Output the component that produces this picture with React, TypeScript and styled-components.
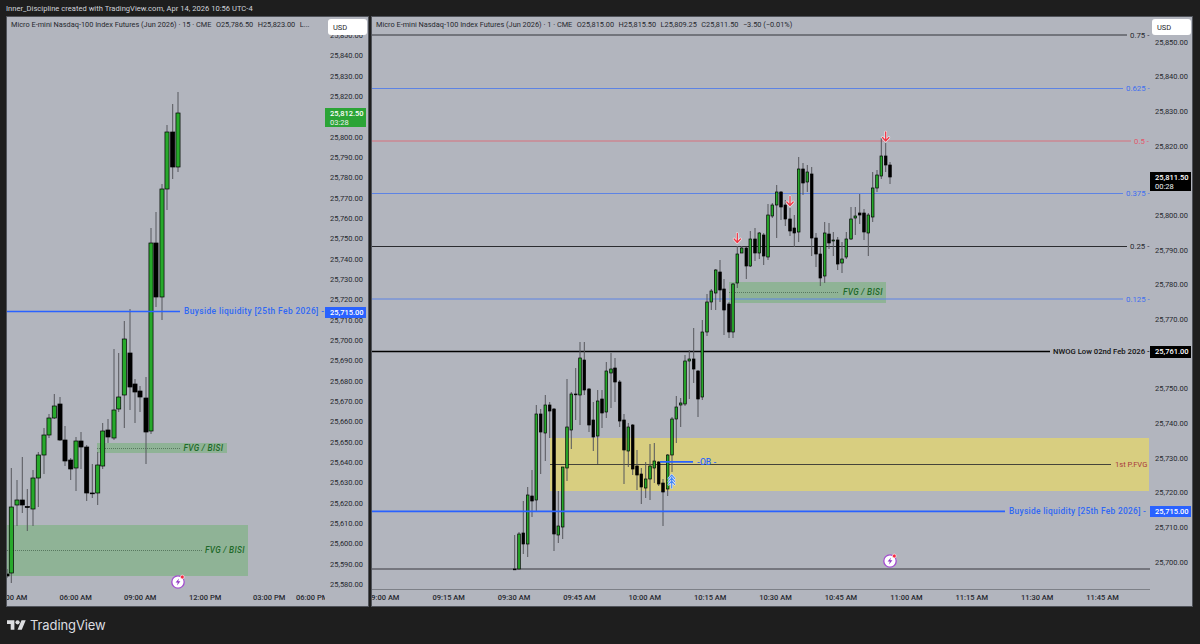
import React from 'react'
import styled, { createGlobalStyle } from 'styled-components'

// candle = [x, high, low, bodyTop, bodyBottom, up]; values are page pixels read off the chart
type Candle = [number, number, number, number, number, number]

const leftCandles: Candle[] = [
  [7, 569, 578, 574, 576, 0],
  [11.3, 468, 583, 507, 573, 1],
  [17, 480, 526, 500, 505, 1],
  [22.3, 457, 513, 500, 505, 0],
  [27.3, 489, 531, 506.5, 507.5, 0],
  [33, 470, 526, 478, 509, 1],
  [38.3, 452, 507, 455, 478, 1],
  [44, 428, 474, 435, 455, 1],
  [49, 414, 438, 418, 435, 1],
  [54.3, 394, 419, 406, 418, 1],
  [60, 397, 441, 404, 440, 0],
  [65, 426, 466, 440, 461, 0],
  [70.7, 458, 480, 460, 469, 0],
  [76, 437, 491, 441, 468, 1],
  [81, 432, 469, 441, 447, 0],
  [86.7, 445, 501, 447, 493, 0],
  [92.3, 464, 498, 493, 493.5, 0],
  [97.7, 452, 505, 465, 493, 1],
  [102.7, 423, 469, 431, 466, 1],
  [108, 419, 443, 430, 437, 0],
  [114, 349, 440, 410, 438, 1],
  [118.7, 353, 412, 397, 409, 1],
  [124.3, 321, 428, 339, 395, 1],
  [130, 309, 410, 353, 387, 0],
  [135, 379, 423, 384, 392, 0],
  [140, 386, 412, 391, 397, 0],
  [146, 377, 464, 398, 432, 0],
  [151, 228, 434, 243, 431, 1],
  [156, 212, 307, 243, 297, 0],
  [162, 184, 320, 189, 297, 1],
  [167, 125, 210, 132, 189, 1],
  [172.7, 104, 179, 132, 167, 0],
  [178, 92, 172, 113, 167, 1]
]

const rightCandles: Candle[] = [
  [514.7, 535, 569, 569, 569, 0],
  [519, 532, 569, 534, 569, 1],
  [523.3, 501, 554, 533, 544, 0],
  [527.7, 487, 557, 495, 544, 1],
  [532, 470, 517, 496, 501, 0],
  [536.3, 405, 511, 414, 500, 1],
  [540.7, 409, 474, 414, 432, 0],
  [545.3, 395, 461, 405, 433, 1],
  [549.7, 402, 438, 405, 411, 0],
  [554, 408, 551, 409, 534, 0],
  [558.3, 491, 543, 526, 535, 1],
  [562.7, 467, 539, 467, 527, 1],
  [567, 379, 481, 427, 468, 1],
  [571.3, 392, 449, 394, 430, 1],
  [575.7, 368, 420, 394, 394.5, 0],
  [580, 342, 425, 358, 395, 1],
  [584.3, 342, 395, 360, 390, 0],
  [589, 388, 432, 389, 425, 0],
  [593.3, 402, 451, 420, 437, 0],
  [597.7, 390, 464, 401, 436, 1],
  [602, 390, 428, 399, 413, 0],
  [606.3, 362, 418, 371, 412, 1],
  [611, 353, 408, 369, 373, 1],
  [615, 358, 402, 368, 382, 0],
  [619.7, 380, 427, 382, 421, 0],
  [624, 414, 484, 420, 450, 0],
  [628.3, 423, 467, 427, 451, 1],
  [632.7, 424, 475, 425, 469, 0],
  [637, 450, 490, 466, 475, 0],
  [641.3, 468, 504, 474, 487, 0],
  [645.7, 462, 498, 479, 488, 1],
  [650, 444, 500, 466, 479, 1],
  [654.3, 443, 483, 461, 468, 1],
  [658.7, 461, 486, 462, 484, 0],
  [663, 479, 526, 483, 492, 0],
  [667.7, 454, 496, 455, 489, 1],
  [672, 417, 472, 419, 455, 1],
  [676.3, 396, 443, 407, 419, 1],
  [680.7, 398, 427, 403, 405, 1],
  [685, 355, 406, 361, 404, 1],
  [689.3, 350, 399, 359, 361, 1],
  [693.7, 328, 383, 359, 369, 0],
  [698, 370, 417, 371, 399, 0],
  [702.3, 320, 400, 332, 397, 1],
  [707, 294, 336, 302, 332, 1],
  [711.3, 289, 310, 291, 302, 1],
  [715.7, 269, 310, 270, 293, 1],
  [720, 260, 302, 272, 290, 0],
  [724, 279, 335, 289, 310, 0],
  [729, 302, 338, 304, 332, 0],
  [733, 283, 338, 284, 332, 1],
  [737.3, 246, 288, 254, 283, 1],
  [741.7, 246, 253, 248, 253, 1],
  [746.3, 247, 279, 248, 266, 0],
  [750.3, 231, 267, 239, 266, 1],
  [755, 228, 261, 239, 253, 0],
  [759.3, 232, 259, 233, 253, 1],
  [763.7, 233, 265, 235, 256, 0],
  [768, 204, 260, 215, 257, 1],
  [772.3, 203, 218, 205, 216, 1],
  [776.7, 185, 238, 192, 205, 1],
  [781, 191, 220, 192, 207, 0],
  [785.3, 200, 226, 205, 219, 0],
  [790, 208, 236, 219, 231, 0],
  [794.3, 215, 247, 228, 233, 0],
  [798.7, 157, 242, 169, 232, 1],
  [803, 163, 195, 169, 183, 0],
  [807.3, 165, 192, 172, 182, 1],
  [811.7, 167, 256, 174, 238, 0],
  [816, 233, 267, 238, 254, 0],
  [820.3, 247, 286, 254, 278, 0],
  [824.7, 222, 283, 233, 276, 1],
  [829, 223, 249, 234, 243, 0],
  [833.3, 232, 256, 240, 241, 1],
  [837.7, 237, 270, 240, 264, 0],
  [842, 242, 273, 259, 263, 1],
  [846.3, 232, 259, 239, 257, 1],
  [851, 207, 240, 219, 239, 1],
  [855.3, 207, 235, 216, 218, 1],
  [859.7, 194, 224, 213, 215, 0],
  [864, 209, 240, 213, 232, 0],
  [868.3, 213, 256, 215, 233, 1],
  [872.7, 172, 222, 188, 217, 1],
  [877, 170, 192, 175, 188, 1],
  [881.3, 138, 179, 156, 176, 1],
  [885.7, 143, 172, 156, 165, 0],
  [890, 162, 184, 165, 177, 0]
]

// ticks that sit under a price tag are left blank
const leftPrices = Array.from({ length: 28 }, (_, i) => 25850 - i * 10)
const rightPrices = Array.from({ length: 16 }, (_, i) => 25850 - i * 10)
const hiddenLeft = [25810]
const hiddenRight = [25810, 25760]
const money = (n: number) => n.toLocaleString('en-US', { minimumFractionDigits: 2 })

const leftTimes: [string, number][] = [['03:00 AM', 64.4], ['06:00 AM', 64.6], ['09:00 AM', 65], ['12:00 PM', 64], ['03:00 PM', 43], ['06:00 PM', 64]]
const rightTimes = ['09:00 AM', '09:15 AM', '09:30 AM', '09:45 AM', '10:00 AM', '10:15 AM', '10:30 AM', '10:45 AM', '11:00 AM', '11:15 AM', '11:30 AM', '11:45 AM']

const GREEN = '#27a92b'
const BLUE = '#2962ff'
const SOFT_BLUE = '#5d83e4'
const RED = '#d8707d'
const FVG = '#8fb396'
const FONT = `Roboto, 'Liberation Sans', sans-serif`

const GlobalStyle = createGlobalStyle`
  html, body { margin: 0; padding: 0; background: #1e1e1e; }
  body { font-family: ${FONT}; }
`

const Page = styled.div`
  width: 1200px;
  height: 644px;
  overflow: hidden;
  background: #1e1e1e;
  display: flex;
  flex-direction: column;
  padding: 0 7px 0 6px;
  box-sizing: border-box;
`

const Credit = styled.div`
  height: 16px;
  line-height: 18px;
  font-size: 7.55px;
  letter-spacing: 0.03px;
  color: #d1d4dc;
  white-space: nowrap;
`

const Panes = styled.div`
  display: flex;
  gap: 2px;
  height: 591px;
`

const Pane = styled.section<{ $width: number; $axis: number }>`
  position: relative;
  width: ${p => p.$width}px;
  box-sizing: border-box;
  border: 1px solid #50535a;
  background: #b2b5be;
  display: grid;
  grid-template-columns: 1fr ${p => p.$axis}px;
  grid-template-rows: 1fr 17px;
  overflow: hidden;
`

const Legend = styled.div<{ $left: number }>`
  position: absolute;
  top: 2px;
  left: ${p => p.$left}px;
  display: flex;
  gap: 4.5px;
  font-size: 7.35px;
  line-height: 12px;
  color: #26282e;
  white-space: nowrap;
`

const Usd = styled.div`
  position: absolute;
  top: 2px;
  right: 1px;
  width: 39px;
  height: 16px;
  box-sizing: border-box;
  padding-left: 5px;
  border-radius: 3px;
  background: #fff;
  font-size: 7.5px;
  line-height: 17px;
  color: #26282e;
  z-index: 2;
`

const Chart = styled.svg`
  display: block;
  grid-column: 1;
  grid-row: 1;
`

const ChartText = styled.text<{ $color: string; $bold?: boolean; $italic?: boolean; $size?: number; $track?: number }>`
  font-family: ${FONT};
  font-size: ${p => p.$size || 8.2}px;
  font-weight: ${p => (p.$bold ? 500 : 400)};
  font-style: ${p => (p.$italic ? 'italic' : 'normal')};
  letter-spacing: ${p => p.$track || 0}px;
  fill: ${p => p.$color};
  dominant-baseline: central;
`

const PriceAxis = styled.div<{ $pad: number }>`
  grid-column: 2;
  grid-row: 1 / 3;
  padding-top: ${p => p.$pad}px;
  overflow: hidden;
`

const PriceTick = styled.div<{ $height: number }>`
  height: ${p => p.$height}px;
  line-height: ${p => p.$height}px;
  padding-left: 5px;
  font-size: 7.5px;
  color: #26282e;
  white-space: nowrap;
`

const TimeAxis = styled.div<{ $rule?: boolean; $shift: number }>`
  grid-column: 1;
  grid-row: 2;
  display: flex;
  overflow: hidden;
  box-sizing: border-box;
  border-top: ${p => (p.$rule ? '1px solid #7d8087' : 'none')};
  line-height: ${p => (p.$rule ? 16 : 17)}px;
  > :first-child { margin-left: ${p => p.$shift}px; }
`

const TimeTick = styled.div<{ $width: number }>`
  flex: 0 0 ${p => p.$width}px;
  font-size: 7.5px;
  font-weight: 500;
  color: #26282e;
  white-space: nowrap;
`

const PriceTag = styled.div<{ $top: number; $left: number; $height: number; $color: string }>`
  position: absolute;
  top: ${p => p.$top}px;
  left: ${p => p.$left}px;
  width: 41px;
  height: ${p => p.$height}px;
  box-sizing: border-box;
  padding: 0 0 0 5px;
  background: ${p => p.$color};
  color: #fff;
  font-size: 7.5px;
  font-weight: 500;
  line-height: ${p => p.$height}px;
  white-space: nowrap;
  z-index: 1;
`

const TagTimer = styled.div`
  font-weight: 400;
  line-height: 8px;
  color: #eef0f3;
`

const TagPrice = styled.div`
  line-height: 10px;
  padding-top: 1px;
`

const Footer = styled.div`
  display: flex;
  align-items: center;
  gap: 4px;
  height: 36px;
  padding: 0 0 1px 1px;
  color: #dcdde0;
  font-family: Inter, 'Liberation Sans', sans-serif;
  font-size: 13px;
  letter-spacing: -0.1px;
`

const Candles = ({ data, width }: { data: Candle[]; width: number }) => (
  <g>
    {data.map(([x, hi, lo, top, bottom, up]) => (
      <g key={x}>
        <line x1={x} x2={x} y1={hi} y2={lo} stroke='#55575c' strokeWidth={1} />
        <rect
          x={x - width / 2}
          y={top}
          width={width}
          height={Math.max(bottom - top, 0.8)}
          fill={up ? GREEN : '#000'}
          stroke='#000'
          strokeWidth={0.7}
        />
      </g>
    ))}
  </g>
)

const DownArrow = ({ x, y }: { x: number; y: number }) => {
  const d = `M${x} ${y - 4.5}V${y + 4.5}M${x - 3.2} ${y + 1}L${x} ${y + 4.5}L${x + 3.2} ${y + 1}`
  return (
    <g fill='none' strokeLinecap='round' strokeLinejoin='round'>
      <path d={d} stroke='#e9e9ee' strokeWidth={2.6} />
      <path d={d} stroke='#f23645' strokeWidth={1.3} />
    </g>
  )
}

const BlueSignal = ({ x, y }: { x: number; y: number }) => {
  const d = `M${x} ${y + 13}V${y + 2}M${x - 3} ${y + 3.5}L${x} ${y}L${x + 3} ${y + 3.5}M${x - 3} ${y + 6.5}L${x} ${y + 3}L${x + 3} ${y + 6.5}M${x - 3} ${y + 9.5}L${x} ${y + 6}L${x + 3} ${y + 9.5}`
  return (
    <g fill='none' strokeLinecap='round' strokeLinejoin='round'>
      <path d={d} stroke='#dfe4f2' strokeWidth={2.2} />
      <path d={d} stroke='#3f86f5' strokeWidth={1.1} />
    </g>
  )
}

const BoltBadge = ({ x, y }: { x: number; y: number }) => (
  <g>
    <circle cx={x} cy={y} r={6.2} fill='#fff' stroke='#a24bcf' strokeWidth={1.3} />
    <path d={`M${x + 1} ${y - 3.4}L${x - 2.4} ${y + 0.6}H${x - 0.2}L${x - 1} ${y + 3.4}L${x + 2.4} ${y - 0.8}H${x + 0.2}Z`} fill='#8e35c4' />
    <circle cx={x + 4.3} cy={y - 5} r={1.9} fill='#f7263f' stroke='#fff' strokeWidth={0.6} />
  </g>
)

const Rule = ({ y, x1, x2, color, width = 1 }: { y: number; x1: number; x2: number; color: string; width?: number }) => (
  <line x1={x1} x2={x2} y1={y} y2={y} stroke={color} strokeWidth={width} />
)

const Dotted = ({ y, x1, x2 }: { y: number; x1: number; x2: number }) => (
  <line x1={x1} x2={x2} y1={y} y2={y} stroke='#33503a' strokeWidth={0.6} strokeDasharray='1 1' />
)

const LeftChart = () => (
  <Chart width={318} height={572} viewBox='7 17 318 572'>
    <rect x={7} y={525} width={241} height={51} fill={FVG} />
    <rect x={97} y={443} width={130} height={10} fill={FVG} />
    <Dotted y={550.5} x1={7} x2={202} />
    <Dotted y={448.5} x1={97} x2={180} />
    <Candles data={leftCandles} width={4.1} />
    <Rule y={311.5} x1={7} x2={180} color={BLUE} width={1.7} />
    <ChartText x={184} y={311} $color='#2f68f5' $bold $size={8.4} $track={0.39}>Buyside liquidity [25th Feb 2026] -</ChartText>
    <ChartText x={205} y={550} $color='#1f6a2a' $bold $italic $size={8.3} $track={0.3}>FVG / BISI</ChartText>
    <ChartText x={183.5} y={448} $color='#1f6a2a' $bold $italic $size={8.3} $track={0.3}>FVG / BISI</ChartText>
    <BoltBadge x={178} y={582} />
  </Chart>
)

const RightChart = () => (
  <Chart width={778} height={572} viewBox='372 17 778 572'>
    <rect x={550} y={438} width={599} height={53} fill='#d8ce80' />
    <rect x={729} y={282} width={157} height={21} fill={FVG} />
    <Rule y={35} x1={372} x2={1127} color='#33353a' />
    <Rule y={88.5} x1={372} x2={1123} color={SOFT_BLUE} />
    <Rule y={141} x1={372} x2={1131} color={RED} />
    <Rule y={193.5} x1={372} x2={1123} color={SOFT_BLUE} />
    <Rule y={299} x1={372} x2={1123} color={SOFT_BLUE} />
    <Rule y={246.5} x1={372} x2={1127} color='#2b2c30' />
    <Rule y={351.5} x1={372} x2={1050} color='#000' width={1.3} />
    <Rule y={464.5} x1={550} x2={1111} color='#45443a' />
    <Rule y={569} x1={372} x2={1150} color='#606268' width={1.3} />
    <Dotted y={292.5} x1={729} x2={839} />
    <Candles data={rightCandles} width={2.6} />
    <Rule y={511.3} x1={372} x2={1005} color={BLUE} width={1.7} />
    <Rule y={461.8} x1={660} x2={693} color={BLUE} width={1.7} />
    <ChartText x={1130} y={35} $color='#26282e' $size={7.8}>0.75 -</ChartText>
    <ChartText x={1126} y={88.5} $color='#3f6ff0' $size={7.8}>0.625 -</ChartText>
    <ChartText x={1134} y={141} $color='#e2566a' $size={7.8}>0.5 -</ChartText>
    <ChartText x={1126} y={193.5} $color='#3f6ff0' $size={7.8}>0.375 -</ChartText>
    <ChartText x={1130} y={246.5} $color='#26282e' $size={7.8}>0.25 -</ChartText>
    <ChartText x={1126} y={299} $color='#3f6ff0' $size={7.8}>0.125 -</ChartText>
    <ChartText x={1053} y={351.5} $color='#111' $bold $size={7.7}>NWOG Low 02nd Feb 2026 -</ChartText>
    <ChartText x={1115} y={464.5} $color='#a83b3b' $size={7.6}>1st P.FVG</ChartText>
    <ChartText x={1009} y={511} $color='#2f68f5' $bold $size={8.4} $track={0.3}>Buyside liquidity [25th Feb 2026] -</ChartText>
    <ChartText x={697} y={462} $color='#2f68f5' $bold $size={8.6}>-OB -</ChartText>
    <ChartText x={843} y={292} $color='#1f6a2a' $bold $italic $size={8.3} $track={0.3}>FVG / BISI</ChartText>
    <DownArrow x={737.3} y={238} />
    <DownArrow x={790} y={201} />
    <DownArrow x={885.7} y={136.5} />
    <BlueSignal x={671.7} y={475} />
    <BoltBadge x={890} y={561} />
  </Chart>
)

export default function App () {
  return (
    <Page>
      <GlobalStyle />
      <Credit>Inner_Discipline created with TradingView.com, Apr 14, 2026 10:56 UTC-4</Credit>
      <Panes>
        <Pane $width={363} $axis={43}>
          <Legend $left={4}>
            <span>Micro E-mini Nasdaq-100 Index Futures (Jun 2026) · 15 · CME</span>
            <span>O25,786.50</span>
            <span>H25,823.00</span>
            <span>L...</span>
          </Legend>
          <Usd>USD</Usd>
          <LeftChart />
          <TimeAxis $shift={-12}>
            {leftTimes.map(([label, width]) => (
              <TimeTick key={label} $width={width}>{label}</TimeTick>
            ))}
          </TimeAxis>
          <PriceAxis $pad={9}>
            {leftPrices.map(n => (
              <PriceTick key={n} $height={20.33}>{hiddenLeft.includes(n) ? '' : money(n)}</PriceTick>
            ))}
          </PriceAxis>
          <PriceTag $top={91} $left={318} $height={19} $color='#2ba436'>
            <TagPrice>25,812.50</TagPrice>
            <TagTimer>03:28</TagTimer>
          </PriceTag>
          <PriceTag $top={289.5} $left={318} $height={11} $color={BLUE}>25,715.00</PriceTag>
        </Pane>
        <Pane $width={822} $axis={42}>
          <Legend $left={4}>
            <span>Micro E-mini Nasdaq-100 Index Futures (Jun 2026) · 1 · CME</span>
            <span>O25,815.00</span>
            <span>H25,815.50</span>
            <span>L25,809.25</span>
            <span>C25,811.50</span>
            <span>−3.50 (−0.01%)</span>
          </Legend>
          <Usd>USD</Usd>
          <RightChart />
          <TimeAxis $rule $shift={-5}>
            {rightTimes.map(label => <TimeTick key={label} $width={65.4}>{label}</TimeTick>)}
          </TimeAxis>
          <PriceAxis $pad={8.7}>
            {rightPrices.map(n => (
              <PriceTick key={n} $height={34.67}>{hiddenRight.includes(n) ? '' : money(n)}</PriceTick>
            ))}
          </PriceAxis>
          <PriceTag $top={155} $left={778} $height={19} $color='#000'>
            <TagPrice>25,811.50</TagPrice>
            <TagTimer>00:28</TagTimer>
          </PriceTag>
          <PriceTag $top={329} $left={778} $height={12} $color='#000'>25,761.00</PriceTag>
          <PriceTag $top={489} $left={778} $height={11} $color={BLUE}>25,715.00</PriceTag>
        </Pane>
      </Panes>
      <Footer>
        <svg width='19' height='10' viewBox='0 4 36 18' fill='#dcdde0'>
          <path d='M14 22H7V11H0V4h14v18zM28 22h-8l7.5-18h8L28 22z' />
          <circle cx='20' cy='8' r='4' />
        </svg>
        TradingView
      </Footer>
    </Page>
  )
}
